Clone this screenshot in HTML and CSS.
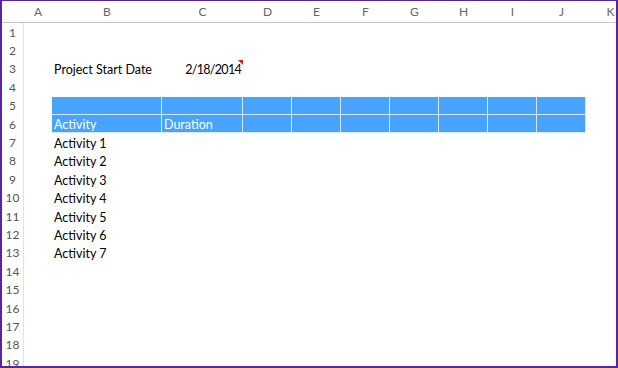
FILE: index.html
```html
<!DOCTYPE html>
<html lang="en">
<head>
  <meta charset="UTF-8" />
  <title>Project Schedule</title>
  <link rel="stylesheet" href="styles.css">
</head>
<body>
  <div class="sheet">
    <div class="row head">
      <div class="num"></div>
      <div class="col">A</div>
      <div class="col">B</div>
      <div class="col">C</div>
      <div class="col">D</div>
      <div class="col">E</div>
      <div class="col">F</div>
      <div class="col">G</div>
      <div class="col">H</div>
      <div class="col">I</div>
      <div class="col">J</div>
      <div class="col">K</div>
    </div>
    <div class="row"><div class="num">1</div></div>
    <div class="row"><div class="num">2</div></div>
    <div class="row">
      <div class="num">3</div>
      <div class="cell"></div>
      <div class="cell">Project Start Date</div>
      <div class="cell date has-note">2/18/2014</div>
    </div>
    <div class="row"><div class="num">4</div></div>
    <div class="row">
      <div class="num">5</div>
      <div class="cell"></div>
      <div class="cell blue"></div>
      <div class="cell blue"></div>
      <div class="cell blue"></div>
      <div class="cell blue"></div>
      <div class="cell blue"></div>
      <div class="cell blue"></div>
      <div class="cell blue"></div>
      <div class="cell blue"></div>
      <div class="cell blue"></div>
    </div>
    <div class="row">
      <div class="num">6</div>
      <div class="cell"></div>
      <div class="cell blue">Activity</div>
      <div class="cell blue">Duration</div>
      <div class="cell blue"></div>
      <div class="cell blue"></div>
      <div class="cell blue"></div>
      <div class="cell blue"></div>
      <div class="cell blue"></div>
      <div class="cell blue"></div>
      <div class="cell blue"></div>
    </div>
    <div class="row"><div class="num">7</div><div class="cell"></div><div class="cell">Activity 1</div></div>
    <div class="row"><div class="num">8</div><div class="cell"></div><div class="cell">Activity 2</div></div>
    <div class="row"><div class="num">9</div><div class="cell"></div><div class="cell">Activity 3</div></div>
    <div class="row"><div class="num">10</div><div class="cell"></div><div class="cell">Activity 4</div></div>
    <div class="row"><div class="num">11</div><div class="cell"></div><div class="cell">Activity 5</div></div>
    <div class="row"><div class="num">12</div><div class="cell"></div><div class="cell">Activity 6</div></div>
    <div class="row"><div class="num">13</div><div class="cell"></div><div class="cell">Activity 7</div></div>
    <div class="row"><div class="num">14</div></div>
    <div class="row"><div class="num">15</div></div>
    <div class="row"><div class="num">16</div></div>
    <div class="row"><div class="num">17</div></div>
    <div class="row"><div class="num">18</div></div>
    <div class="row"><div class="num">19</div></div>
  </div>
</body>
</html>
```

FILE: styles.css
```css
html, body {
  margin: 0;
  height: 100%;
}

body {
  font-family: Lato, "Liberation Sans", sans-serif;
  font-size: 12.5px;
  color: #000000;
  background: #ffffff;
}

.sheet {
  box-sizing: border-box;
  height: 368px;
  border: 2px solid #5a22a8;
  border-top-width: 1px;
  overflow: hidden;
  background: #ffffff;
}

.row {
  display: grid;
  grid-template-columns: 22px 28px 110px 81px repeat(7, 49px) 49px;
  height: 18.4px;
  align-items: center;
}

.row.head {
  height: 22px;
  box-sizing: border-box;
  border-bottom: 1px solid #c4c4c4;
}

.num {
  box-sizing: border-box;
  height: 100%;
  display: flex;
  align-items: center;
  justify-content: center;
  border-right: 1px solid #e2e2e2;
  color: #555555;
  font-size: 12px;
}

.head .num {
  border-right: none;
}

.col {
  text-align: center;
  color: #666666;
  font-size: 12px;
}

.cell {
  box-sizing: border-box;
  height: 100%;
  display: flex;
  align-items: center;
  padding: 2px 0 0 2px;
  white-space: nowrap;
}

.cell.date {
  justify-content: flex-end;
  padding-right: 2px;
  letter-spacing: -0.7px;
}

.has-note {
  position: relative;
}

.has-note::after {
  content: "";
  position: absolute;
  top: 0;
  right: 0;
  border-top: 5px solid #e0141c;
  border-left: 5px solid transparent;
}

.cell.blue {
  background: #47a3fb;
  color: #ffffff;
  border-right: 1px solid #d4e9fd;
  border-bottom: 1px solid #d4e9fd;
}
```
